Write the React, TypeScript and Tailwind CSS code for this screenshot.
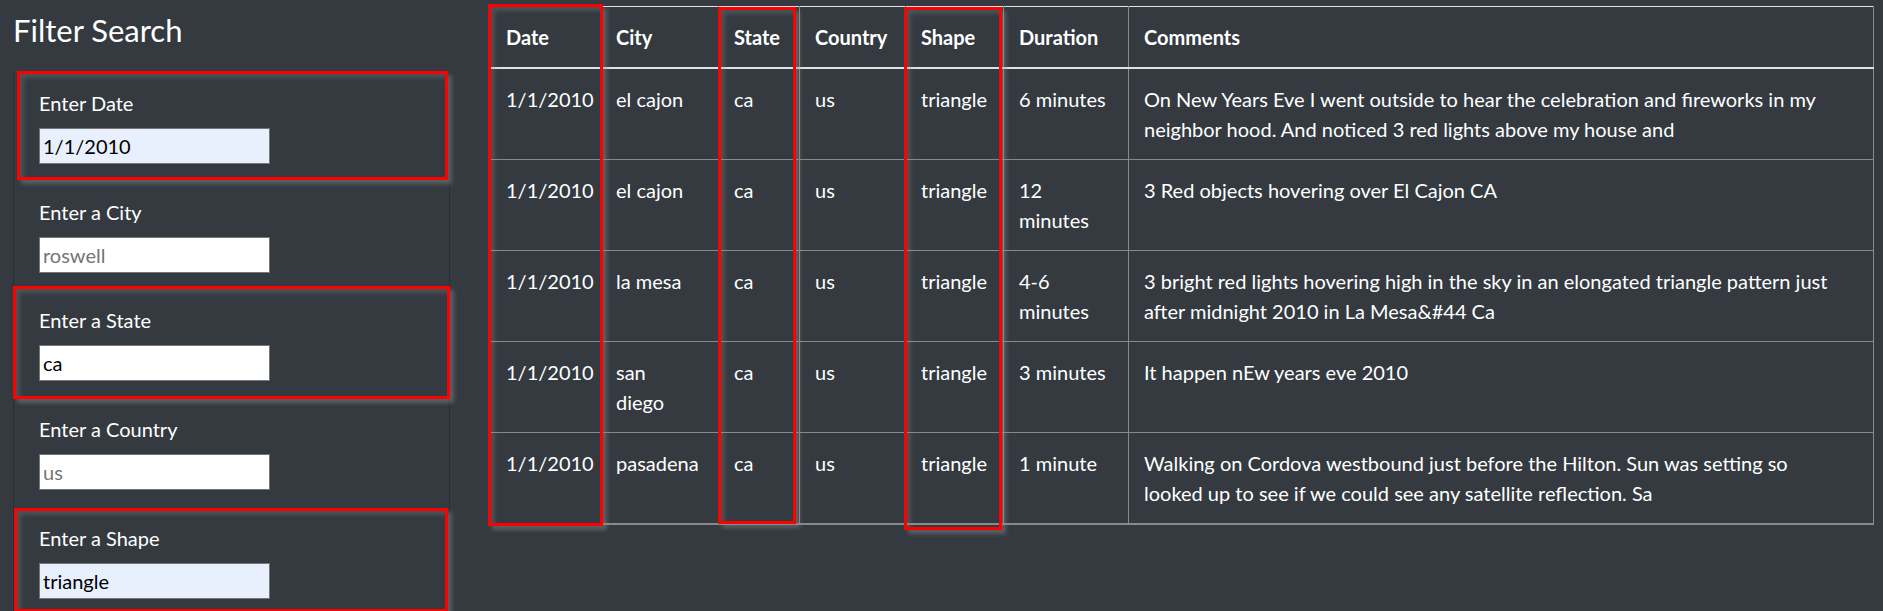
import React from "react";

type Row = {
  date: string;
  city: string[];
  state: string;
  country: string;
  shape: string;
  duration: string[];
  comments: string[];
};

const rows: Row[] = [
  {
    date: "1/1/2010",
    city: ["el cajon"],
    state: "ca",
    country: "us",
    shape: "triangle",
    duration: ["6 minutes"],
    comments: [
      "On New Years Eve I went outside to hear the celebration and fireworks in my",
      "neighbor hood. And noticed 3 red lights above my house and",
    ],
  },
  {
    date: "1/1/2010",
    city: ["el cajon"],
    state: "ca",
    country: "us",
    shape: "triangle",
    duration: ["12", "minutes"],
    comments: ["3 Red objects hovering over El Cajon CA"],
  },
  {
    date: "1/1/2010",
    city: ["la mesa"],
    state: "ca",
    country: "us",
    shape: "triangle",
    duration: ["4-6", "minutes"],
    comments: [
      "3 bright red lights hovering high in the sky in an elongated triangle pattern just",
      "after midnight 2010 in La Mesa&#44 Ca",
    ],
  },
  {
    date: "1/1/2010",
    city: ["san", "diego"],
    state: "ca",
    country: "us",
    shape: "triangle",
    duration: ["3 minutes"],
    comments: ["It happen nEw years eve 2010"],
  },
  {
    date: "1/1/2010",
    city: ["pasadena"],
    state: "ca",
    country: "us",
    shape: "triangle",
    duration: ["1 minute"],
    comments: [
      "Walking on Cordova westbound just before the Hilton. Sun was setting so",
      "looked up to see if we could see any satellite reflection. Sa",
    ],
  },
];

function Lines({ lines }: { lines: string[] }) {
  return (
    <>
      {lines.map((l, i) => (
        <div key={i} className="whitespace-nowrap">
          {l}
        </div>
      ))}
    </>
  );
}

const redBox =
  "absolute pointer-events-none border-[3px] border-[#ff0000] shadow-[4px_4px_4px_rgba(140,140,140,0.45),inset_4px_4px_4px_rgba(140,140,140,0.3)]";

function FilterItem({
  label,
  value,
  placeholder,
  autofill,
}: {
  label: string;
  value?: string;
  placeholder?: string;
  autofill?: boolean;
}) {
  return (
    <li className="h-[108.7px] px-[25px] pt-[15px]">
      <label className="block text-[20px] leading-[30px] text-white">{label}</label>
      <input
        type="text"
        defaultValue={value}
        placeholder={placeholder}
        className={
          "mt-[10px] block h-[36px] w-[231px] border border-[#767676] px-[3px] text-[20px] text-black outline-none placeholder:text-[#757575] " +
          (autofill ? "bg-[#e8f0fe]" : "bg-white")
        }
      />
    </li>
  );
}

export default function App() {
  const th =
    "px-[15px] py-[15px] text-left font-bold border border-[#8a8a8a] border-t-[#dee2e6] border-b-2 border-b-[#dee2e6]";
  return (
    <div className="flex h-[611px] w-[1883px] overflow-hidden bg-[#343a40] font-['Lato',sans-serif] text-white">
      <aside className="w-[490px] shrink-0 pl-[13px] pr-[40px]">
        <h1 className="mt-[12px] text-[31px] leading-[36px] font-normal">Filter Search</h1>
        <ul className="relative mt-[25px] border-x border-[#2a2f34]">
          <FilterItem label="Enter Date" value="1/1/2010" autofill />
          <FilterItem label="Enter a City" placeholder="roswell" />
          <FilterItem label="Enter a State" value="ca" />
          <FilterItem label="Enter a Country" placeholder="us" />
          <FilterItem label="Enter a Shape" value="triangle" autofill />
          <div className={redBox + " left-[3px] top-[-2px] w-[431px] h-[109px]"} />
          <div className={redBox + " left-[-1px] top-[213px] w-[437px] h-[113px]"} />
          <div className={redBox + " left-[0px] top-[435px] w-[434px] h-[104px]"} />
        </ul>
      </aside>
      <main className="mt-[6px] w-[1383px] shrink-0">
        <div className="relative">
          <table className="w-[1383px] table-fixed border-collapse text-[20px] leading-[30px]">
            <colgroup>
              <col className="w-[110px]" />
              <col className="w-[118px]" />
              <col className="w-[81px]" />
              <col className="w-[106px]" />
              <col className="w-[98px]" />
              <col className="w-[125px]" />
              <col className="w-[745px]" />
            </colgroup>
            <thead>
              <tr>
                <th className={th}>Date</th>
                <th className={th}>City</th>
                <th className={th}>State</th>
                <th className={th}>Country</th>
                <th className={th}>Shape</th>
                <th className={th}>Duration</th>
                <th className={th}>Comments</th>
              </tr>
            </thead>
            <tbody>
              {rows.map((r, i) => {
                const td =
                  "px-[15px] py-[15px] align-top border border-[#8a8a8a]" +
                  (i === rows.length - 1 ? " border-b-2" : "");
                return (
                  <tr key={i}>
                    <td className={td}>{r.date}</td>
                    <td className={td}>
                      <Lines lines={r.city} />
                    </td>
                    <td className={td}>{r.state}</td>
                    <td className={td}>{r.country}</td>
                    <td className={td}>{r.shape}</td>
                    <td className={td}>
                      <Lines lines={r.duration} />
                    </td>
                    <td className={td}>
                      <Lines lines={r.comments} />
                    </td>
                  </tr>
                );
              })}
            </tbody>
          </table>
          <div className={redBox + " left-[-2px] top-[-2px] w-[115px] h-[522px]"} />
          <div className={redBox + " left-[228px] top-[1px] w-[78px] h-[517px]"} />
          <div className={redBox + " left-[414px] top-[1px] w-[98px] h-[523px]"} />
        </div>
      </main>
    </div>
  );
}
